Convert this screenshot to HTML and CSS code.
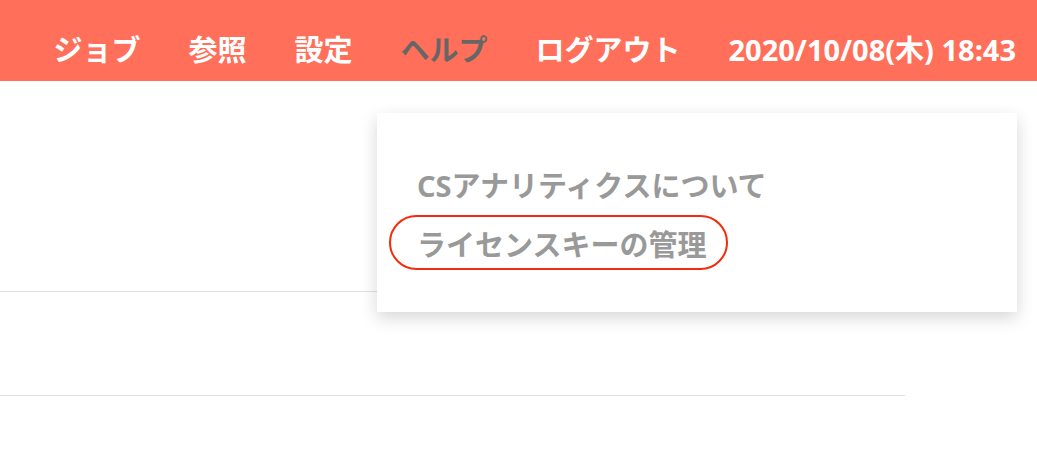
FILE: index.html
```html
<!DOCTYPE html>
<html lang="ja">
<head>
    <meta charset="UTF-8">
    <meta name="viewport" content="width=device-width, initial-scale=1.0">
    <title>CSアナリティクス</title>
    <link rel="stylesheet" href="styles.css">
</head>
<body>
    <header class="topbar">
        <nav class="nav">
            <a class="nav-item" href="#">ジョブ</a>
            <a class="nav-item" href="#">参照</a>
            <a class="nav-item" href="#">設定</a>
            <a class="nav-item active" href="#">ヘルプ</a>
            <a class="nav-item" href="#">ログアウト</a>
            <span class="clock">2020/10/08(木) 18:43</span>
        </nav>
    </header>

    <main class="content">
        <div class="row row-first"></div>
        <div class="row row-second"></div>
    </main>

    <div class="help-menu">
        <ul>
            <li><a href="#">CSアナリティクスについて</a></li>
            <li><a href="#" class="marked">ライセンスキーの管理</a></li>
        </ul>
    </div>
</body>
</html>
```

FILE: styles.css
```css
body {
    margin: 0;
    padding: 0;
    font-family: 'Noto Sans', 'Noto Sans CJK JP', sans-serif;
    background: #fff;
    color: #333;
    position: relative;
    overflow: hidden;
}

a {
    text-decoration: none;
    color: inherit;
}

.topbar {
    height: 81px;
    background: #ff6f5a;
    display: flex;
    justify-content: flex-end;
    align-items: center;
    box-sizing: border-box;
    padding: 18px 21px 0 0;
}

.nav {
    display: flex;
    align-items: center;
    gap: 48px;
    font-size: 29px;
    font-weight: bold;
    color: #fff;
    line-height: 40px;
}

.nav-item.active {
    color: #666;
}

.content {
    width: 905px;
}

.row-first {
    height: 210px;
    border-bottom: 1px solid #e0e0e0;
}

.row-second {
    height: 103px;
    border-bottom: 1px solid #e0e0e0;
}

.help-menu {
    position: absolute;
    left: 377px;
    top: 113px;
    width: 640px;
    height: 199px;
    background: #fff;
    box-shadow: 0 6px 16px rgba(0, 0, 0, 0.16);
}

.help-menu ul {
    list-style: none;
    margin: 0;
    padding: 43px 0 0 40px;
}

.help-menu li {
    font-size: 29px;
    font-weight: bold;
    color: #999;
    line-height: 59px;
}

.marked {
    position: relative;
}

.marked:after {
    content: '';
    position: absolute;
    left: -28px;
    right: -22px;
    top: -10px;
    bottom: -6px;
    border: 2px solid #f52c0c;
    border-radius: 30px;
}
```
